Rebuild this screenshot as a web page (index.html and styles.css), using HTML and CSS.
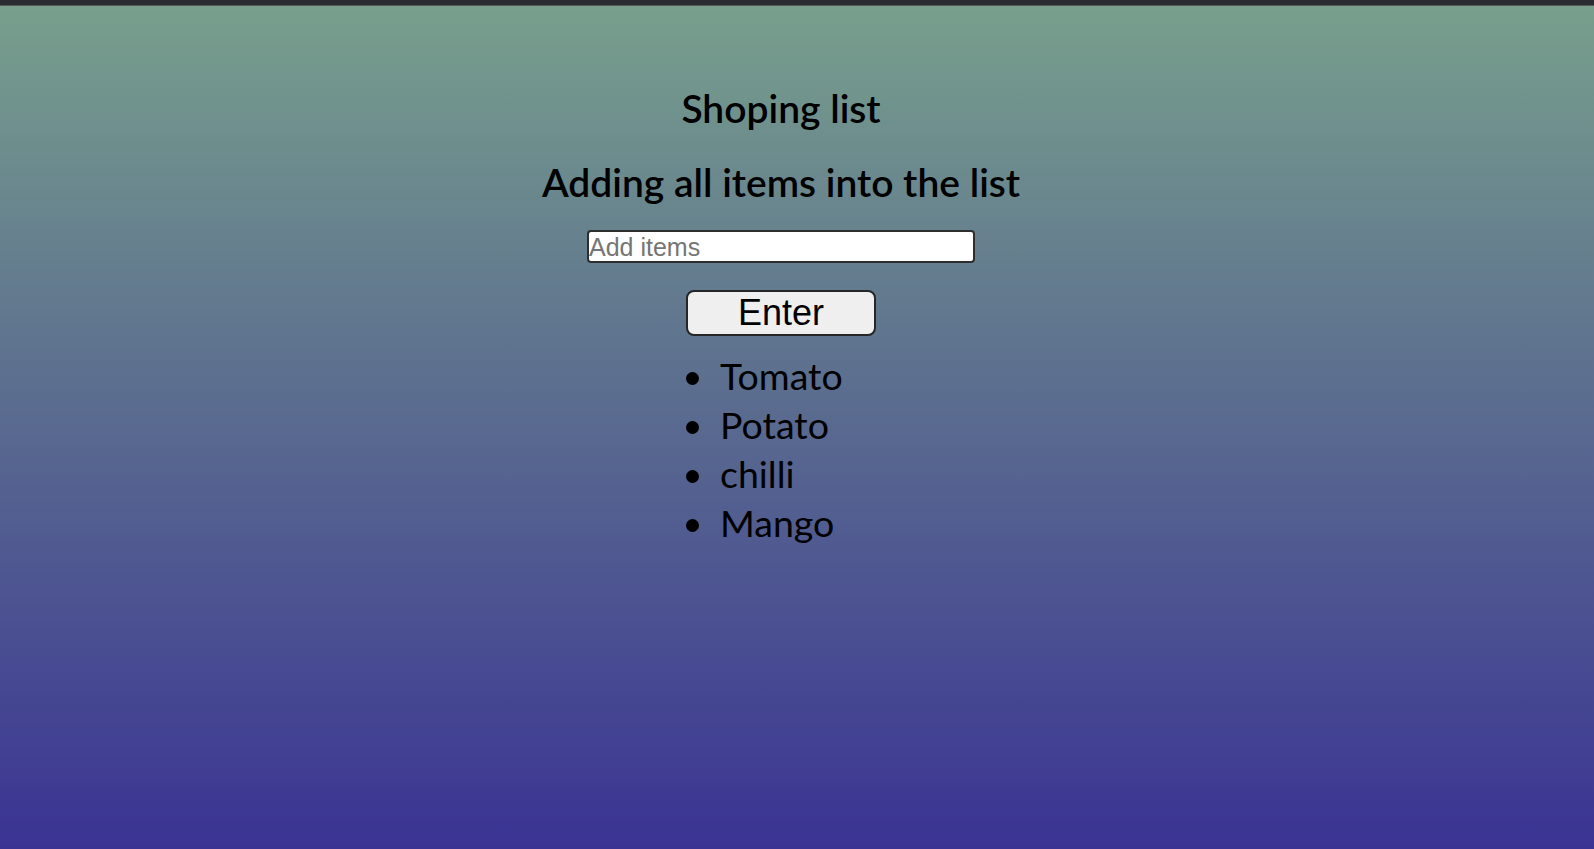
FILE: index.html
```html
<!DOCTYPE html>
<html lang="en">
<head>
<meta charset="utf-8">
<title>Shoping list</title>
<link rel="stylesheet" href="styles.css">
</head>
<body>
<div class="topbar"></div>
<main class="app">
  <h1 class="title">Shoping list</h1>
  <h2 class="subtitle">Adding all items into the list</h2>
  <input class="item-input" type="text" placeholder="Add items">
  <button class="enter-btn" type="button">Enter</button>
  <ul class="items">
    <li>Tomato</li>
    <li>Potato</li>
    <li>chilli</li>
    <li>Mango</li>
  </ul>
</main>
</body>
</html>
```
FILE: styles.css
```css
html, body {
  margin: 0;
  padding: 0;
}

body {
  min-height: 100vh;
  background: linear-gradient(to bottom, #78a08c 0%, #3a3393 100%);
  font-family: "Lato", "Open Sans", sans-serif;
  color: #000;
  display: flex;
  flex-direction: column;
}

.topbar {
  height: 5px;
  background: #2b2c32;
  border-bottom: 1px solid #55585d;
  flex: none;
}

.app {
  display: flex;
  flex-direction: column;
  align-items: center;
  padding-right: 32px;
}

.title,
.subtitle {
  margin: 0;
  font-size: 39px;
  font-weight: 600;
  line-height: 47px;
}

.title {
  margin-top: 79px;
}

.subtitle {
  margin-top: 27px;
}

.item-input {
  box-sizing: border-box;
  margin-top: 24px;
  width: 388px;
  height: 33px;
  padding: 1px 0 0 0;
  border: 2px solid #2e2e2e;
  border-radius: 4px;
  background: #fff;
  font-family: "Liberation Sans", Arial, sans-serif;
  font-size: 25px;
  color: #000;
  outline: none;
}

.item-input::placeholder {
  color: #757575;
}

.enter-btn {
  box-sizing: border-box;
  margin-top: 27px;
  width: 190px;
  height: 46px;
  padding: 0;
  border: 2px solid #262626;
  border-radius: 8px;
  background: #efefef;
  font-family: "Liberation Sans", Arial, sans-serif;
  font-size: 36px;
  line-height: 42px;
  color: #000;
}

.items {
  margin: 15px 0 0 0;
  padding: 0;
  width: 122px;
  list-style: none;
  font-size: 37.5px;
  line-height: 49px;
}

.items li {
  white-space: nowrap;
}

.items li::before {
  content: "";
  display: inline-block;
  width: 13px;
  height: 13px;
  margin-left: -34px;
  margin-right: 21px;
  border-radius: 50%;
  background: #000;
  vertical-align: 5px;
}
```
